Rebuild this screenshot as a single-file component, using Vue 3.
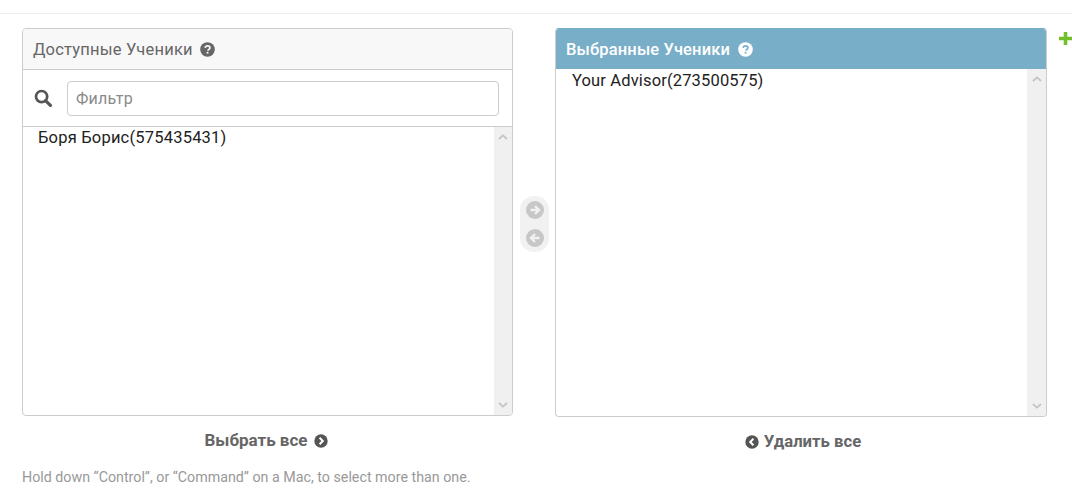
<script setup>
const leftItems = ['Боря Борис(575435431)']
const rightItems = ['Your Advisor(273500575)']
</script>

<template>
  <div class="page">
    <div class="topline"></div>
    <div class="row">
      <div class="col left">
        <section class="panel panel-left">
          <h2 class="head">
            Доступные Ученики
            <svg class="help" viewBox="0 0 16 16"><circle cx="8" cy="8" r="7.8" fill="currentColor"/><path d="M5.5 6.3c.2-1.4 1.2-2.1 2.6-2.1 1.4 0 2.5.8 2.5 2 0 1-.6 1.5-1.3 1.9-.6.4-.8.6-.8 1.2" fill="none" stroke="var(--hole)" stroke-width="1.8"/><rect x="7.1" y="10.5" width="1.9" height="1.9" fill="var(--hole)"/></svg>
          </h2>
          <div class="filter">
            <svg class="search" viewBox="0 0 18 18"><circle cx="7.6" cy="7.6" r="5.6" fill="none" stroke="currentColor" stroke-width="2.7"/><path d="M11.8 11.8l4.6 4.6" stroke="currentColor" stroke-width="3.2" stroke-linecap="round"/></svg>
            <input class="input" placeholder="Фильтр" />
          </div>
          <div class="list">
            <div class="items"><div v-for="i in leftItems" :key="i" class="item">{{ i }}</div></div>
            <div class="scroll">
              <svg viewBox="0 0 10 6"><path d="M1 5l4-3.6L9 5" fill="none" stroke="#c4c4c4" stroke-width="1.8"/></svg>
              <svg viewBox="0 0 10 6"><path d="M1 1l4 3.6L9 1" fill="none" stroke="#c4c4c4" stroke-width="1.8"/></svg>
            </div>
          </div>
        </section>
        <a class="action action-l">
          Выбрать все
          <svg class="chev" viewBox="0 0 14 14"><circle cx="7" cy="7" r="6.7" fill="#555"/><path d="M5.6 3.8L8.8 7l-3.2 3.2" fill="none" stroke="#fff" stroke-width="2"/></svg>
        </a>
        <p class="hint">Hold down “Control”, or “Command” on a Mac, to select more than one.</p>
      </div>

      <div class="mid">
        <div class="pill">
          <svg class="arrow" viewBox="0 0 18 18"><circle cx="9" cy="9" r="9" fill="#c7c7c7"/><path d="M4.5 9h8M9 5l4 4-4 4" fill="none" stroke="#f1f1f1" stroke-width="2.4"/></svg>
          <svg class="arrow" viewBox="0 0 18 18"><circle cx="9" cy="9" r="9" fill="#c7c7c7"/><path d="M13.5 9h-8M9 5L5 9l4 4" fill="none" stroke="#f1f1f1" stroke-width="2.4"/></svg>
        </div>
      </div>

      <div class="col right">
        <section class="panel panel-right">
          <h2 class="head head-blue">
            Выбранные Ученики
            <svg class="help" viewBox="0 0 16 16"><circle cx="8" cy="8" r="7.8" fill="currentColor"/><path d="M5.5 6.3c.2-1.4 1.2-2.1 2.6-2.1 1.4 0 2.5.8 2.5 2 0 1-.6 1.5-1.3 1.9-.6.4-.8.6-.8 1.2" fill="none" stroke="#79aec8" stroke-width="1.8"/><rect x="7.1" y="10.5" width="1.9" height="1.9" fill="#79aec8"/></svg>
          </h2>
          <div class="list">
            <div class="items items-r"><div v-for="i in rightItems" :key="i" class="item item-r">{{ i }}</div></div>
            <div class="scroll scroll-r">
              <svg viewBox="0 0 10 6"><path d="M1 5l4-3.6L9 5" fill="none" stroke="#c4c4c4" stroke-width="1.8"/></svg>
              <svg viewBox="0 0 10 6"><path d="M1 1l4 3.6L9 1" fill="none" stroke="#c4c4c4" stroke-width="1.8"/></svg>
            </div>
          </div>
        </section>
        <a class="action action-r">
          <svg class="chev" viewBox="0 0 14 14"><circle cx="7" cy="7" r="6.7" fill="#555"/><path d="M8.4 3.8L5.2 7l3.2 3.2" fill="none" stroke="#fff" stroke-width="2"/></svg>
          Удалить все
        </a>
      </div>

      <div class="plus-wrap">
        <svg class="plus" viewBox="0 0 13 13"><path d="M6.5 0v13M0 6.5h13" stroke="#70bf2b" stroke-width="3.6"/></svg>
      </div>
    </div>
  </div>
</template>

<style>
html, body { margin: 0; background: #fff; overflow: hidden; }
</style>

<style scoped>
.page {
  width: 1072px;
  height: 489px;
  font-family: Roboto, "Liberation Sans", sans-serif;
  overflow: hidden;
  box-sizing: border-box;
}
.topline { height: 13px; border-bottom: 1px solid #eee; }
.row { display: flex; padding: 14px 0 0 22px; align-items: flex-start; }
.col { display: flex; flex-direction: column; }
.left { width: 491px; }
.right { width: 492px; }
.mid { width: 42px; display: flex; padding: 168px 0 0 7px; box-sizing: border-box; }
.pill {
  width: 29px;
  height: 56px;
  border-radius: 14px;
  background: #f1f1f1;
  display: flex;
  flex-direction: column;
  align-items: center;
  justify-content: space-between;
  padding: 5px 0;
  box-sizing: border-box;
}
.arrow { width: 18px; height: 18px; display: block; }
.panel {
  border: 1px solid #ccc;
  border-radius: 4px;
  overflow: hidden;
  display: flex;
  flex-direction: column;
  box-sizing: border-box;
  background: #fff;
}
.panel-left { height: 388px; --hole: #f8f8f8; }
.panel-right { height: 389px; border-top-color: #79aec8; }
.head {
  margin: 0;
  height: 41px;
  flex: none;
  box-sizing: border-box;
  padding: 0 10px;
  display: flex;
  align-items: center;
  font-size: 16.5px;
  font-weight: 400;
  color: #666;
  background: #f8f8f8;
  border-bottom: 1px solid #ccc;
  letter-spacing: 0.2px;
}
.head-blue {
  height: 40px;
  background: #79aec8;
  color: #fff;
  font-weight: 500;
  border-bottom: none;
  letter-spacing: 0.15px;
}
.help { width: 15px; height: 15px; margin-left: 7px; flex: none; }
.head-blue .help { margin-left: 8px; }
.filter {
  height: 57px;
  flex: none;
  display: flex;
  align-items: center;
  box-sizing: border-box;
  padding: 0 13px 0 11px;
  border-bottom: 1px solid #ccc;
  color: #555;
}
.search { width: 18px; height: 18px; flex: none; margin-right: 15px; }
.input {
  flex: 1;
  min-width: 0;
  height: 35px;
  box-sizing: border-box;
  border: 1px solid #ccc;
  border-radius: 4px;
  padding: 0 8px;
  font: 16px Roboto, sans-serif;
  letter-spacing: 0.2px;
  outline: none;
}
.input::placeholder { color: #8a8a8a; opacity: 1; }
.list { flex: 1; display: flex; min-height: 0; }
.items { flex: 1; padding: 0 15px; }
.items-r { padding-top: 1px; }
.item {
  font-size: 16.5px;
  line-height: 21px;
  color: #222;
  letter-spacing: 0.2px;
}
.item-r { padding-left: 1px; letter-spacing: 0.15px; }
.scroll {
  width: 18px;
  flex: none;
  background: #f0f0f0;
  display: flex;
  flex-direction: column;
  justify-content: space-between;
  align-items: center;
  padding: 7px 0;
  box-sizing: border-box;
}
.scroll-r { width: 19px; }
.scroll svg { width: 10px; height: 6px; display: block; }
.action {
  display: flex;
  align-items: center;
  justify-content: center;
  font-weight: 700;
  color: #666;
  height: 20px;
  cursor: pointer;
}
.action-l { margin-top: 14px; font-size: 17px; margin-right: 3px; }
.action-r { margin-top: 14px; font-size: 16.7px; margin-left: 4px; }
.chev { width: 14px; height: 14px; flex: none; }
.action-l .chev { margin-left: 6px; margin-top: 2px; }
.action-r .chev { margin-right: 5px; margin-top: 2px; }
.hint {
  margin: 18px 0 0;
  font-size: 14.25px;
  line-height: 18px;
  color: #999;
  white-space: nowrap;
}
.plus-wrap { padding: 4px 0 0 12px; }
.plus { width: 13px; height: 13px; display: block; }
</style>
